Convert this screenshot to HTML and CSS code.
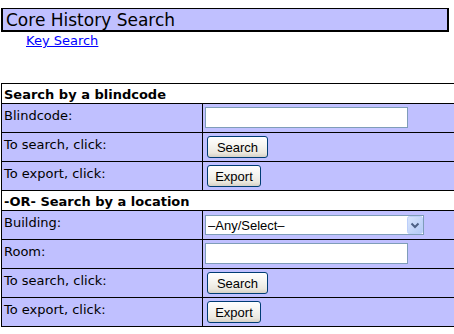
FILE: index.html
```html
<!DOCTYPE html>
<html>
<head>
<meta charset="utf-8">
<title>Core History Search</title>
<link rel="stylesheet" href="styles.css">
</head>
<body>
<div class="title">Core History Search</div>
<div class="nav"><a href="#">Key Search</a></div>
<table class="form">
  <colgroup><col class="c1"><col class="c2"></colgroup>
  <tr class="head"><td colspan="2">Search by a blindcode</td></tr>
  <tr class="row"><td class="lbl">Blindcode:</td><td class="ctl"><input type="text" class="txt"></td></tr>
  <tr class="row"><td class="lbl">To search, click:</td><td class="ctl"><button class="btn btn-search">Search</button></td></tr>
  <tr class="row"><td class="lbl">To export, click:</td><td class="ctl"><button class="btn btn-export">Export</button></td></tr>
  <tr class="head"><td colspan="2">-OR- Search by a location</td></tr>
  <tr class="row"><td class="lbl">Building:</td><td class="ctl sel-cell">
    <span class="sel">
      <select><option>&ndash;Any/Select&ndash;</option></select>
      <svg class="arrow" width="16" height="18" viewBox="0 0 16 18">
        <defs>
          <linearGradient id="ag" x1="0" y1="0" x2="1" y2="1">
            <stop offset="0" stop-color="#d9e5fd"/>
            <stop offset="1" stop-color="#b3c9f6"/>
          </linearGradient>
        </defs>
        <rect x="0.5" y="0.5" width="15" height="17" rx="2" fill="url(#ag)" stroke="#bccffa"/>
        <path d="M4.5 7.5 L8 11 L11.5 7.5" fill="none" stroke="#4d6185" stroke-width="2"/>
      </svg>
    </span>
  </td></tr>
  <tr class="row"><td class="lbl">Room:</td><td class="ctl"><input type="text" class="txt"></td></tr>
  <tr class="row"><td class="lbl">To search, click:</td><td class="ctl"><button class="btn btn-search">Search</button></td></tr>
  <tr class="row"><td class="lbl">To export, click:</td><td class="ctl"><button class="btn btn-export">Export</button></td></tr>
</table>
</body>
</html>
```
FILE: styles.css
```css
html, body {
  margin: 0;
  background: #fff;
  overflow: hidden;
}
body {
  padding: 8px 0 0 1px;
  font-family: "DejaVu Sans", Verdana, sans-serif;
  font-size: 13px;
  color: #000;
}
.title {
  width: 441px;
  height: 20px;
  padding: 1px 0 0 3px;
  border: solid #000;
  border-width: 1px 2px 2px 2px;
  background: #c0c0ff;
  font-size: 17px;
  line-height: 20px;
}
.nav {
  margin-top: 1px;
  padding-left: 25px;
  line-height: 15px;
}
.nav a {
  color: #0000ff;
  text-decoration: underline;
}
.form {
  margin-top: 35px;
  width: 456px;
  table-layout: fixed;
  border-collapse: collapse;
  border: 1px solid #000;
}
.c1 { width: 201px; }
.form td {
  border: 1px solid #000;
  vertical-align: top;
  padding: 0;
  line-height: 15px;
}
.head td {
  background: #fff;
  font-weight: bold;
  height: 20px;
  padding: 3px 0 0 2px;
  box-sizing: border-box;
}
.row td {
  background: #c0c0ff;
  height: 29px;
  box-sizing: border-box;
}
.row .lbl { padding: 4px 0 0 2px; }
.row .ctl { padding: 3px 0 0 2px; }
.row .sel-cell { padding-top: 4px; }
.txt {
  display: block;
  width: 203px;
  height: 21px;
  box-sizing: border-box;
  margin: 0;
  border: 1px solid #7f9db9;
  background: #fff;
  font: 13px "Liberation Sans", Arial, sans-serif;
  padding: 0 2px;
}
.btn {
  display: block;
  margin: 0 0 0 2px;
  height: 22px;
  box-sizing: border-box;
  padding: 0;
  border: 1px solid #003c74;
  border-radius: 3px;
  background: linear-gradient(#ffffff 0%, #f5f4ef 45%, #ebe8df 80%, #d6d0c5 100%);
  font: 13px "Liberation Sans", Arial, sans-serif;
  color: #000;
  text-align: center;
}
.btn-search { width: 61px; }
.btn-export { width: 54px; }
.sel {
  position: relative;
  display: block;
  width: 219px;
  height: 20px;
}
.sel select {
  appearance: none;
  -webkit-appearance: none;
  display: block;
  width: 100%;
  height: 100%;
  margin: 0;
  box-sizing: border-box;
  border: 1px solid #7f9db9;
  border-radius: 0;
  background: #fff;
  font: 13px "Liberation Sans", Arial, sans-serif;
  color: #000;
  padding: 0 0 0 2px;
}
.arrow {
  position: absolute;
  right: 1px;
  top: 1px;
  pointer-events: none;
}
```
